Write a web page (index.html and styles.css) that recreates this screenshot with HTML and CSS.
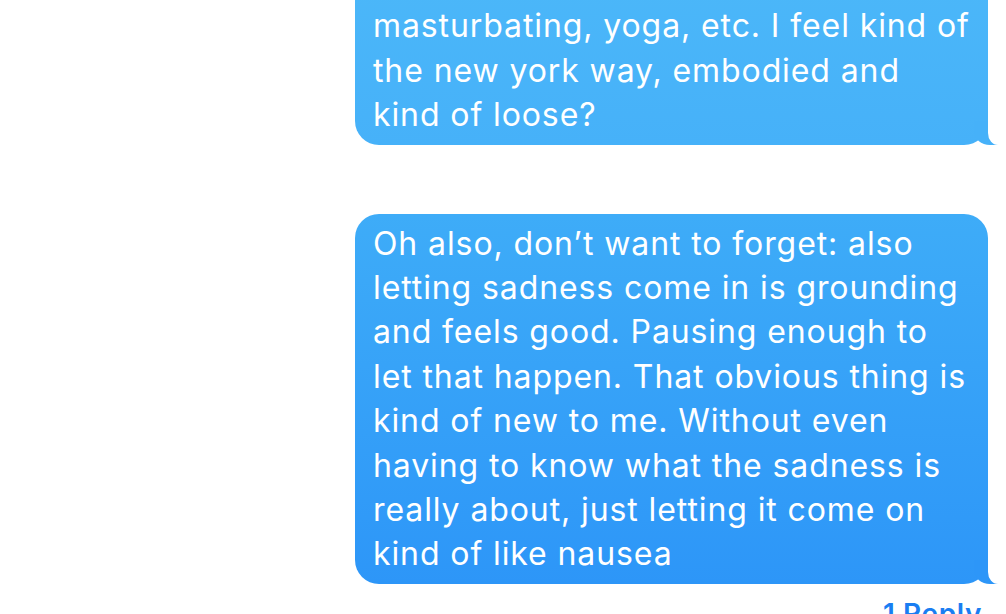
FILE: index.html
```html
<!DOCTYPE html>
<html lang="en">
<head>
    <meta charset="UTF-8">
    <meta name="viewport" content="width=device-width, initial-scale=1.0">
    <title>Messages</title>
    <link rel="stylesheet" href="styles.css">
</head>
<body>
    <div class="thread">
        <div class="row">
            <div class="bubble first">
                (going out, being social, dancing,<br>
                masturbating, yoga, etc. I feel kind of<br>
                the new york way, embodied and<br>
                kind of loose?
            </div>
        </div>

        <div class="row">
            <div class="bubble second">
                Oh also, don’t want to forget: also<br>
                letting sadness come in is grounding<br>
                and feels good. Pausing enough to<br>
                let that happen. That obvious thing is<br>
                kind of new to me. Without even<br>
                having to know what the sadness is<br>
                really about, just letting it come on<br>
                kind of like nausea
            </div>
        </div>

        <div class="reply">1 Reply</div>
    </div>
</body>
</html>
```

FILE: styles.css
```css
body {
    margin: 0;
    background: #ffffff;
    font-family: Inter, "Liberation Sans", Arial, sans-serif;
    overflow: hidden;
}
.thread {
    margin-top: -48px;
    padding-right: 18px;
    display: flex;
    flex-direction: column;
    align-items: flex-end;
    gap: 69px;
}
.row {
    display: flex;
    justify-content: flex-end;
}
.bubble {
    position: relative;
    box-sizing: border-box;
    width: 633px;
    padding: 8px 18px 7px 18px;
    border-radius: 24px;
    color: #ffffff;
    font-size: 32px;
    line-height: 44.4px;
    letter-spacing: 0.9px;
}
.first {
    background: linear-gradient(#4cb8f9, #46b1f9);
}
.second {
    background: linear-gradient(#3eacf8, #2d96f8);
}
/* tail */
.bubble::before {
    content: "";
    position: absolute;
    right: -10px;
    bottom: 0;
    width: 24px;
    height: 24px;
    background: inherit;
    border-bottom-left-radius: 16px 14px;
}
.first::before {
    background: #46b1f9;
}
.second::before {
    background: #2d96f8;
}
.bubble::after {
    content: "";
    position: absolute;
    right: -18px;
    bottom: 0;
    width: 18px;
    height: 26px;
    background: #ffffff;
    border-bottom-left-radius: 10px 12px;
}
.reply {
    margin-top: -56px;
    margin-right: 6px;
    color: #1a7ef2;
    font-size: 28px;
    font-weight: 600;
    letter-spacing: 0.6px;
}
```
